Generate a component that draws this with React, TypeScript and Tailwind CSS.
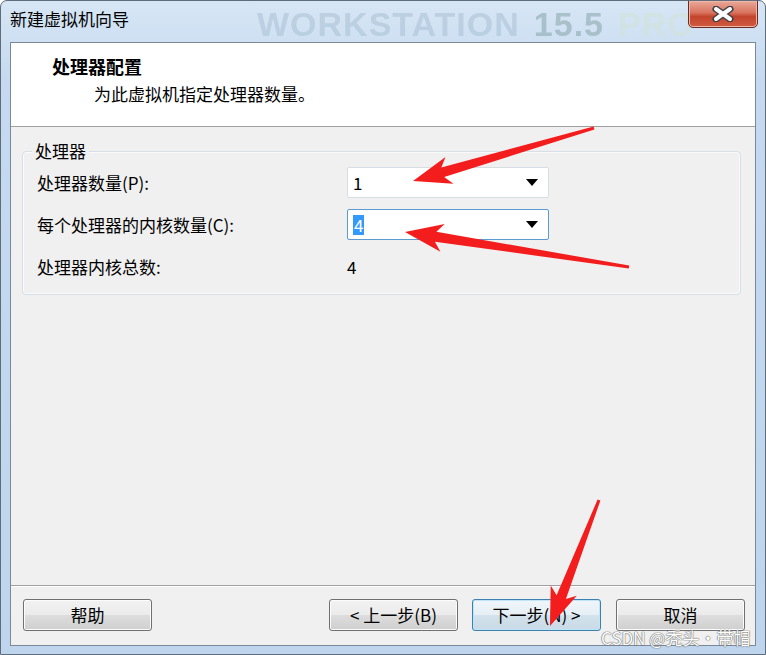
import React from "react";

const font = "font-['Noto_Sans_CJK_SC','Noto_Sans',sans-serif]";

// tapered red annotation arrow, from tail to tip
const arrowPoints = (
  tx: number,
  ty: number,
  px: number,
  py: number,
  headLen = 31,
  headW = 14,
  neckW = 5,
  tailW = 1.5
) => {
  const len = Math.hypot(px - tx, py - ty);
  const ux = (px - tx) / len;
  const uy = (py - ty) / len;
  const nx = -uy;
  const ny = ux;
  const neckX = px - ux * headLen;
  const neckY = py - uy * headLen;
  const barbX = neckX - ux * 7;
  const barbY = neckY - uy * 7;
  const pts = [
    [tx + nx * tailW, ty + ny * tailW],
    [neckX + nx * neckW, neckY + ny * neckW],
    [barbX + nx * headW, barbY + ny * headW],
    [px, py],
    [barbX - nx * headW, barbY - ny * headW],
    [neckX - nx * neckW, neckY - ny * neckW],
    [tx - nx * tailW, ty - ny * tailW],
  ];
  return pts.map((p) => p.map((v) => v.toFixed(1)).join(",")).join(" ");
};

const Combo = ({ value, focused }: { value: string; focused?: boolean }) => (
  <div
    className={`w-[202px] h-[31px] bg-white rounded-[2px] border flex items-center justify-between pl-[5px] pr-[10px] ${
      focused ? "border-[#5b9bd1]" : "border-[#d8dde3]"
    }`}
  >
    {focused ? (
      <span className="bg-[#3399ff] text-white leading-[20px] px-[1px]">{value}</span>
    ) : (
      <span className="leading-[20px]">{value}</span>
    )}
    <svg width="12" height="7" viewBox="0 0 12 7">
      <path d="M0 0 H12 L6 7 Z" fill="#000" />
    </svg>
  </div>
);

const WinButton = ({ children, focused }: { children: React.ReactNode; focused?: boolean }) => (
  <button
    className={`h-[32px] w-[129px] rounded-[3px] border text-[17px] text-black flex items-center justify-center ${
      focused
        ? "border-[#3c7fb1] shadow-[inset_0_0_0_1px_#bfe6f8] bg-[linear-gradient(#f0f6fa_0%,#e6eff5_50%,#d3e2ec_51%,#c9dbe7_100%)]"
        : "border-[#707070] shadow-[inset_0_0_0_1px_#fcfcfc] bg-[linear-gradient(#f2f2f2_0%,#ebebeb_50%,#dddddd_51%,#cfcfcf_100%)]"
    }`}
  >
    {children}
  </button>
);

export default function App() {
  return (
    <div
      className={`relative w-[766px] h-[655px] overflow-hidden rounded-t-[7px] border border-[#5e6c7b] bg-[linear-gradient(180deg,#d7e6f5_0%,#c5daf0_12%,#bed5ed_100%)] ${font}`}
    >
      {/* title bar */}
      <div className="relative h-[41px] flex items-center pl-[9px] overflow-hidden">
        <span className="text-[17px] text-black leading-none pb-[7px] z-10">新建虚拟机向导</span>
        <div className="absolute left-[256px] top-[6px] flex items-baseline gap-[14px] font-['Liberation_Sans',sans-serif] font-bold text-[34px] leading-[34px] tracking-[1px] opacity-70 blur-[0.6px]">
          <span className="text-[#b3c8da]">WORKSTATION</span>
          <span className="text-[#98b3b9]">15.5</span>
          <span className="text-[#d0e3dc]">PRO</span>
        </div>
        <div className="absolute right-[7px] -top-[1px] w-[70px] h-[28px] rounded-b-[5px] border border-[#6b2a22] bg-[linear-gradient(180deg,#eaa999_0%,#d8735e_45%,#c4442c_60%,#cf5b40_100%)] shadow-[inset_0_0_0_1px_#f0b7a8] flex items-center justify-center">
          <svg width="22" height="16" viewBox="0 0 22 16">
            <path d="M4 3 L18 13 M18 3 L4 13" stroke="#3f3f46" strokeWidth="7" strokeLinecap="round" />
            <path d="M4 3 L18 13 M18 3 L4 13" stroke="#ffffff" strokeWidth="4" strokeLinecap="round" />
          </svg>
        </div>
      </div>

      {/* client area */}
      <div className="mx-[9px] h-[604px] border border-[#7b8897] flex flex-col text-black">
        <div className="h-[84px] shrink-0 bg-white border-b border-[#a0a0a0] pt-[10px] pl-[41px]">
          <div className="text-[18px] font-bold leading-[26px]">处理器配置</div>
          <div className="text-[17px] leading-[26px] pl-[42px] pt-[2px]">为此虚拟机指定处理器数量。</div>
        </div>

        <div className="flex-1 bg-[#f0f0f0] pt-[24px] pl-[11px] pr-[14px]">
          <div className="relative h-[144px] rounded-[4px] border border-[#d5dfe5] shadow-[inset_0_0_0_1px_#fafafa] pt-[15px] pl-[14px] text-[17px]">
            <span className="absolute -top-[13px] left-[9px] bg-[#f0f0f0] px-[3px] leading-[24px]">处理器</span>
            <div className="flex flex-col gap-[11px]">
              <div className="flex items-center h-[31px]">
                <span className="w-[310px]">处理器数量(P):</span>
                <Combo value="1" />
              </div>
              <div className="flex items-center h-[31px]">
                <span className="w-[310px]">每个处理器的内核数量(C):</span>
                <Combo value="4" focused />
              </div>
              <div className="flex items-center h-[31px]">
                <span className="w-[310px]">处理器内核总数:</span>
                <span>4</span>
              </div>
            </div>
          </div>
        </div>

        <div className="h-[60px] shrink-0 bg-[#f0f0f0] border-t border-[#a0a0a0] shadow-[inset_0_1px_0_#ffffff] pt-[13px] pl-[12px] pr-[10px] flex">
          <WinButton>帮助</WinButton>
          <div className="ml-auto flex">
            <WinButton>&lt; 上一步(B)</WinButton>
            <div className="ml-[14px]">
              <WinButton focused>下一步(N) &gt;</WinButton>
            </div>
            <div className="ml-[15px]">
              <WinButton>取消</WinButton>
            </div>
          </div>
        </div>
      </div>

      {/* CSDN watermark */}
      <div className="absolute left-[600px] top-[626px] text-[17px] leading-[22px] text-white [text-shadow:0_0_1px_#6b6b6b,0_0_1px_#6b6b6b,0_0_1px_#6b6b6b]">
        CSDN @秃头·带帽
      </div>

      {/* red annotation arrows */}
      <svg className="absolute inset-0 pointer-events-none" width="766" height="655" viewBox="0 0 766 655">
        <polygon points={arrowPoints(593, 127, 412, 180)} fill="#f41d1d" />
        <polygon points={arrowPoints(628, 266, 404, 231)} fill="#f41d1d" />
        <polygon points={arrowPoints(598, 499, 549, 625)} fill="#f41d1d" />
      </svg>
    </div>
  );
}
